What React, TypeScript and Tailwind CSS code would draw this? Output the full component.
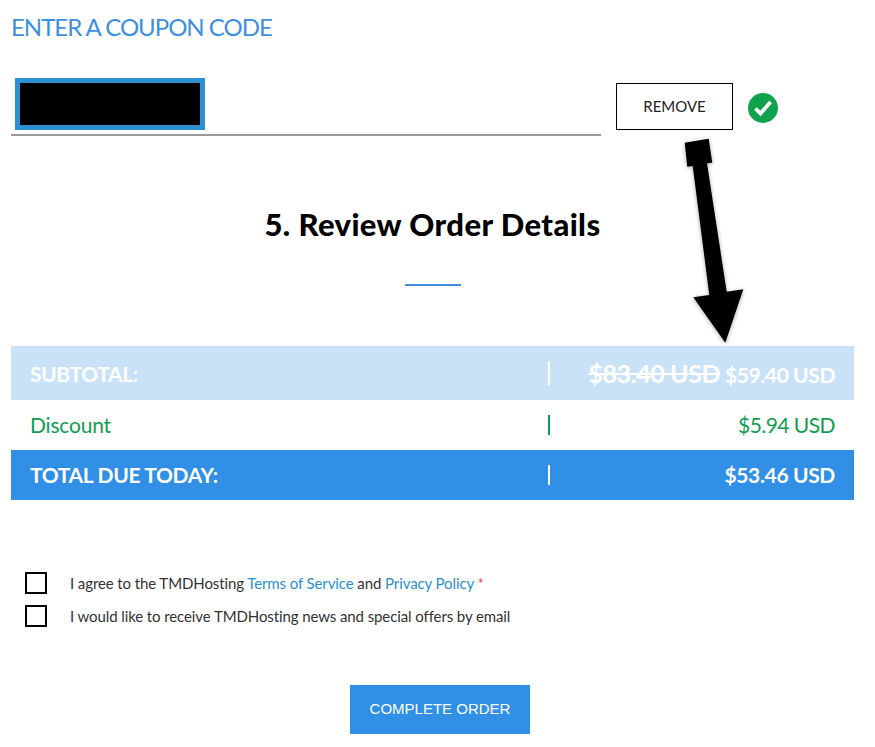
export default function App() {
  const lato = "font-['Lato','Carlito',sans-serif]";
  return (
    <div className={`relative h-[747px] w-[875px] overflow-hidden bg-white pl-[11px] ${lato}`}>
      <h2 className="pt-[12px] text-[24px] leading-[30px] tracking-[-1px] text-[#3d8fdf]">ENTER A COUPON CODE</h2>

      <div className="mt-[36px] flex items-start">
        <div className="h-[58px] w-[590px] border-b-2 border-[#9a9a9a] pl-1">
          <div className="h-[52px] w-[190px] border-[5px] border-[#2b8fd0] bg-black" />
        </div>
        <button className="ml-[15px] mt-[5px] h-[47px] w-[117px] border border-black text-[15px] text-[#222]">REMOVE</button>
        <svg className="ml-[14px] mt-[14px]" width="32" height="32" viewBox="0 0 32 32" aria-hidden="true">
          <circle cx="16" cy="16" r="15" fill="#0fa34f" />
          <path d="M8.5 16.5l5 5 10-11.5" fill="none" stroke="#fff" strokeWidth="3.8" />
        </svg>
      </div>

      <h1 className="mt-[68px] w-[843px] text-center text-[31px] font-black leading-[40px] tracking-[0.4px] text-black">5. Review Order Details</h1>
      <div className="ml-[394px] mt-[40px] h-[2px] w-[56px] bg-[#3d8fdf]" />

      <div className="mt-[60px] w-[843px]">
        <div className="flex h-[54px] items-center bg-[#cae2f8] text-[21px] font-bold tracking-[-0.4px] text-white">
          <span className="w-[537px] pl-[19px] pt-[2px]">SUBTOTAL:</span>
          <span className="h-[24px] w-[2px] bg-white" />
          <span className="flex-1 pr-[19px] pt-[2px] text-right">
            <s className="text-[25px]">$83.40 USD</s> $59.40 USD
          </span>
        </div>
        <div className="flex h-[50px] items-center text-[21px] text-[#0f9d4f]">
          <span className="w-[537px] pl-[19px] tracking-[-0.2px]">Discount</span>
          <span className="h-[20px] w-[2px] bg-[#0f9d4f]" />
          <span className="flex-1 pr-[19px] text-right tracking-[-0.55px]">$5.94 USD</span>
        </div>
        <div className="flex h-[50px] items-center bg-[#318fe6] text-[21px] font-bold tracking-[-0.35px] text-white">
          <span className="w-[537px] pl-[19px]">TOTAL DUE TODAY:</span>
          <span className="h-[20px] w-[2px] bg-white" />
          <span className="flex-1 pr-[19px] text-right">$53.46 USD</span>
        </div>
      </div>

      <div className="ml-[14px] mt-[72px] flex flex-col gap-[11px] text-[15px] tracking-[-0.1px] text-[#333]">
        <label className="flex h-[22px] items-center">
          <span className="h-[22px] w-[22px] border-2 border-black" />
          <span className="ml-[23px]">
            I agree to the TMDHosting <a className="text-[#2b8fd0]">Terms of Service</a> and <a className="text-[#2b8fd0]">Privacy Policy</a> <span className="text-[#e8434f]">*</span>
          </span>
        </label>
        <label className="flex h-[22px] items-center">
          <span className="h-[22px] w-[22px] border-2 border-black" />
          <span className="ml-[23px]">I would like to receive TMDHosting news and special offers by email</span>
        </label>
      </div>

      <button className="ml-[339px] mt-[58px] h-[49px] w-[180px] bg-[#318fe6] font-['Liberation_Sans',sans-serif] text-[15px] text-white">COMPLETE ORDER</button>

      <svg className="absolute left-0 top-0 drop-shadow-[0_1px_2px_rgba(0,0,0,0.35)]" width="875" height="747" viewBox="0 0 875 747" aria-hidden="true">
        <path d="M684.7 142.7L708.7 138.7L712.3 162.7L707 163.3L726.7 291.7L743.3 289.3L725.3 342.7L693.3 297.3L709.3 295L692.7 166L687.3 166.7Z" fill="#000" />
      </svg>
    </div>
  );
}
